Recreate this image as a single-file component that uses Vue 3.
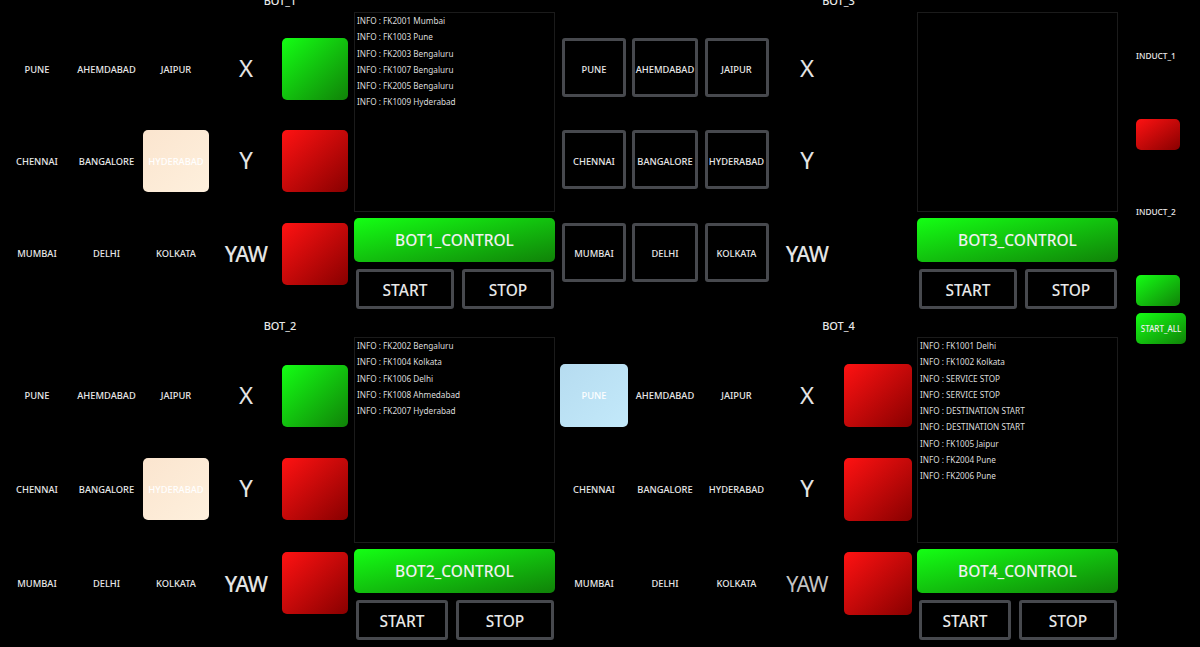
<script setup>
const cities = ['PUNE', 'AHEMDABAD', 'JAIPUR', 'CHENNAI', 'BANGALORE', 'HYDERABAD', 'MUMBAI', 'DELHI', 'KOLKATA']

const bots = [
  {
    id: 1,
    active: 'HYDERABAD',
    activeClass: 'tile-cream',
    lights: ['green', 'red', 'red'],
    wideStart: true,
    logs: ['FK2001 Mumbai', 'FK1003 Pune', 'FK2003 Bengaluru', 'FK1007 Bengaluru', 'FK2005 Bengaluru', 'FK1009 Hyderabad'],
  },
  {
    id: 3,
    outlined: true,
    lights: [],
    wideStart: true,
    logs: [],
  },
  {
    id: 2,
    active: 'HYDERABAD',
    activeClass: 'tile-cream',
    lights: ['green', 'red', 'red'],
    wideStart: false,
    logs: ['FK2002 Bengaluru', 'FK1004 Kolkata', 'FK1006 Delhi', 'FK1008 Ahmedabad', 'FK2007 Hyderabad'],
  },
  {
    id: 4,
    active: 'PUNE',
    activeClass: 'tile-blue',
    lights: ['red', 'red', 'red'],
    wideStart: false,
    dimYaw: true,
    logs: ['FK1001 Delhi', 'FK1002 Kolkata', 'SERVICE STOP', 'SERVICE STOP', 'DESTINATION START', 'DESTINATION START', 'FK1005 Jaipur', 'FK2004 Pune', 'FK2006 Pune'],
  },
]

const axes = ['X', 'Y', 'YAW']

const rowCities = (row) => cities.slice(row * 3, row * 3 + 3)
</script>

<template>
  <div class="screen">
    <div class="board">
      <section
        v-for="bot in bots"
        :key="bot.id"
        class="panel"
        :class="[`bot-${bot.id}`, bot.id % 2 ? 'panel-top' : 'panel-bottom', bot.id < 3 ? 'panel-left' : 'panel-right']"
      >
        <h2 class="panel-title">BOT_{{ bot.id }}</h2>
        <div class="panel-body">
          <div class="matrix">
            <template v-for="(axis, row) in axes" :key="axis">
              <div v-for="city in rowCities(row)" :key="city" class="cell">
                <button
                  class="tile"
                  :class="[bot.outlined ? 'tile-outline' : '', city === bot.active ? bot.activeClass : '']"
                >{{ city }}</button>
              </div>
              <div
                class="cell axis"
                :class="{ 'axis-yaw': axis === 'YAW', 'axis-dim': bot.dimYaw && axis === 'YAW' }"
              >{{ axis }}</div>
              <div class="cell">
                <span v-if="bot.lights[row]" class="light" :class="`is-${bot.lights[row]}`"></span>
              </div>
            </template>
          </div>
          <div class="console">
            <div class="log">
              <div v-for="(line, i) in bot.logs" :key="i" class="log-line">INFO : {{ line }}</div>
            </div>
            <button class="control is-green">BOT{{ bot.id }}_CONTROL</button>
            <div class="actions">
              <button class="action" :class="bot.wideStart ? 'wide' : 'narrow'">START</button>
              <button class="action" :class="bot.wideStart ? 'narrow' : 'wide'">STOP</button>
            </div>
          </div>
        </div>
      </section>

      <aside class="side">
        <div class="side-label">INDUCT_1</div>
        <span class="side-light is-red"></span>
        <div class="side-label second">INDUCT_2</div>
        <span class="side-light is-green"></span>
        <button class="start-all is-green">START_ALL</button>
      </aside>
    </div>
  </div>
</template>

<style scoped>
.screen {
  width: 1200px;
  height: 647px;
  overflow: hidden;
  background: #000;
  color: #e8e8e8;
  font-family: "Noto Sans", "Open Sans", sans-serif;
  font-weight: 500;
}

.board {
  display: grid;
  grid-template-columns: 555px 563px 1fr;
  grid-template-rows: auto auto;
  grid-auto-flow: row;
  row-gap: 10px;
  margin-top: -6px;
}

.panel-right {
  padding-left: 4px;
}

.panel-title {
  height: 13px;
  margin: 0 0 5px;
  font-size: 11px;
  font-weight: 500;
  line-height: 13px;
  text-align: center;
}

.panel-left .panel-title {
  padding-left: 5px;
}

.panel-body {
  display: grid;
  column-gap: 2px;
}

.panel-left .panel-body {
  grid-template-columns: 352px 201px;
}

.panel-right .panel-body {
  grid-template-columns: 355px 201px;
  column-gap: 3px;
}

.panel-top .panel-body {
  height: 297px;
}

.panel-bottom .panel-body {
  height: 303px;
}

.matrix {
  display: grid;
  grid-auto-rows: 1fr;
}

.panel-top .matrix {
  padding: 11px 0 9px;
}

.panel-bottom .matrix {
  padding: 12px 0 10px;
}

.panel-left .matrix {
  grid-template-columns: 74px 65px 74px 66px 72px;
}

.panel-right .matrix {
  grid-template-columns: 70px 72px 71px 70px 72px;
}

.cell {
  display: flex;
  align-items: center;
  justify-content: center;
  min-width: 0;
}

.tile {
  flex: none;
  padding: 0;
  border: 0;
  background: transparent;
  color: #e8e8e8;
  font-family: inherit;
  font-size: 9.3px;
  font-weight: 500;
  white-space: nowrap;
}

.tile-outline {
  width: 64px;
  height: 59px;
  margin-top: -3px;
  padding-top: 3px;
  border: 3px solid #47494e;
  border-radius: 3px;
}

.cell:nth-child(5n + 2) .tile-outline {
  width: 66px;
}

.tile-cream {
  width: 66px;
  height: 62px;
  border-radius: 5px;
  background: linear-gradient(to bottom right, #fbe5cf, #fef0dd);
  color: #fff;
}

.tile-blue {
  width: 68px;
  height: 63px;
  border-radius: 5px;
  background: linear-gradient(to bottom right, #b6dcf0, #c3e9fa);
  color: #fff;
}

.axis {
  padding-bottom: 3px;
  font-size: 24px;
  font-weight: 400;
  color: #e4e4e4;
}

.axis-yaw {
  padding-bottom: 0;
  font-size: 21.5px;
  font-weight: 500;
  letter-spacing: -0.8px;
}

.axis-dim {
  color: #c4c4c4;
  font-weight: 400;
}

.light {
  flex: none;
  width: 66px;
  height: 62px;
  border-radius: 5px;
}

.panel-right .light {
  width: 68px;
  height: 63px;
}

.is-green {
  background: linear-gradient(to bottom right, #14ff14, #108208);
}

.is-red {
  background: linear-gradient(to bottom right, #ff1212, #880000);
}

.console {
  display: flex;
  flex-direction: column;
  min-width: 0;
}

.log {
  flex: 1;
  border: 1px solid #1b1b1b;
  padding-left: 2px;
}

.log-line {
  height: 16.25px;
  font-size: 8.2px;
  font-weight: 400;
  line-height: 16.25px;
  color: #dcdcdc;
  white-space: nowrap;
}

.control {
  flex: none;
  height: 44px;
  margin-top: 6px;
  padding: 0;
  border: 0;
  border-radius: 5px;
  color: #f0f0f0;
  font-family: inherit;
  font-size: 15.5px;
  font-weight: 500;
}

.actions {
  display: flex;
  flex: none;
  justify-content: space-between;
  height: 40px;
  margin-top: 7px;
  padding: 0 1px 0 2px;
}

.action {
  padding: 2px 0 0;
  border: 3px solid #47494e;
  border-radius: 3px;
  background: transparent;
  color: #e8e8e8;
  font-family: inherit;
  font-size: 15.5px;
  font-weight: 500;
}

.wide {
  width: 98px;
}

.narrow {
  width: 92px;
}

.side {
  display: flex;
  flex-direction: column;
  align-items: flex-start;
  grid-column: 3;
  grid-row: 1 / span 2;
  padding: 56px 0 0 18px;
}

.side-label {
  height: 12px;
  font-size: 8.3px;
  line-height: 12px;
  white-space: nowrap;
}

.second {
  margin-top: 56px;
}

.side-light {
  width: 44px;
  height: 31px;
  margin-top: 57px;
  border-radius: 5px;
}

.start-all {
  width: 50px;
  height: 31px;
  margin-top: 7px;
  padding: 0;
  border: 0;
  border-radius: 5px;
  color: #eee;
  font-family: inherit;
  font-size: 8px;
  font-weight: 500;
  white-space: nowrap;
}
</style>
